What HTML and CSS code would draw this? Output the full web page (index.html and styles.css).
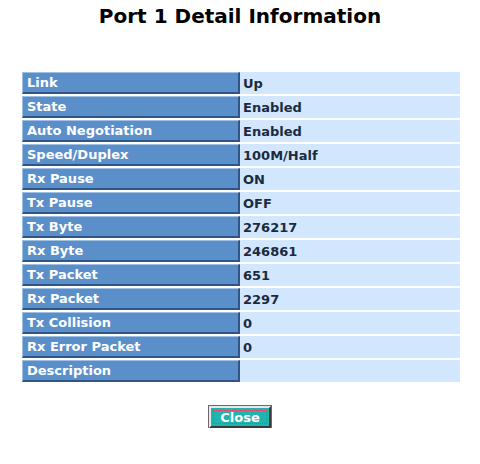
FILE: index.html
```html
<!DOCTYPE html>
<html>
<head>
<meta charset="utf-8">
<link rel="stylesheet" href="styles.css">
</head>
<body>
<h1 class="title">Port 1 Detail Information</h1>
<table class="detail">
<tr><td class="lbl">Link</td><td class="val">Up</td></tr>
<tr><td class="lbl">State</td><td class="val">Enabled</td></tr>
<tr><td class="lbl">Auto Negotiation</td><td class="val">Enabled</td></tr>
<tr><td class="lbl">Speed/Duplex</td><td class="val">100M/Half</td></tr>
<tr><td class="lbl">Rx Pause</td><td class="val">ON</td></tr>
<tr><td class="lbl">Tx Pause</td><td class="val">OFF</td></tr>
<tr><td class="lbl">Tx Byte</td><td class="val">276217</td></tr>
<tr><td class="lbl">Rx Byte</td><td class="val">246861</td></tr>
<tr><td class="lbl">Tx Packet</td><td class="val">651</td></tr>
<tr><td class="lbl">Rx Packet</td><td class="val">2297</td></tr>
<tr><td class="lbl">Tx Collision</td><td class="val">0</td></tr>
<tr><td class="lbl">Rx Error Packet</td><td class="val">0</td></tr>
<tr><td class="lbl">Description</td><td class="val"></td></tr>
</table>
<div class="actions"><button class="close">Close</button></div>
</body>
</html>
```
FILE: styles.css
```css
html, body {
  margin: 0;
  padding: 0;
  background: #ffffff;
  font-family: "DejaVu Sans", Verdana, sans-serif;
}
.title {
  margin: 0;
  padding-top: 4px;
  height: 70px;
  box-sizing: border-box;
  text-align: center;
  font-size: 20px;
  font-weight: bold;
  color: #000000;
  line-height: 24px;
}
.detail {
  margin-left: 22px;
  width: 438px;
  border-collapse: separate;
  border-spacing: 0 2px;
  font-size: 13px;
  font-weight: bold;
}
.detail td {
  height: 22px;
  padding: 0;
  box-sizing: border-box;
}
.lbl {
  width: 218px;
  background: #5b8fca;
  color: #ffffff;
  padding-left: 4px !important;
  border-top: 1px solid #9dbfe4;
  border-left: 1px solid #9dbfe4;
  border-right: 2px solid #2f5687;
  border-bottom: 2px solid #2f5687;
}
.val {
  background: #d2e7fd;
  color: #1b2a3d;
  padding-left: 3px !important;
}
.actions {
  margin-top: 22px;
  text-align: center;
}
.close {
  width: 62px;
  height: 22px;
  padding: 0;
  background: #1fb4ae;
  color: #ffffff;
  font-family: "DejaVu Sans", Verdana, sans-serif;
  font-size: 13px;
  font-weight: bold;
  border: 2px solid;
  border-color: #e8e8e8 #3a3a3a #3a3a3a #e8e8e8;
  box-shadow: 0 0 0 1px #6a6a6a;
  outline: 1px dotted #e04060;
  outline-offset: -5px;
}
```
